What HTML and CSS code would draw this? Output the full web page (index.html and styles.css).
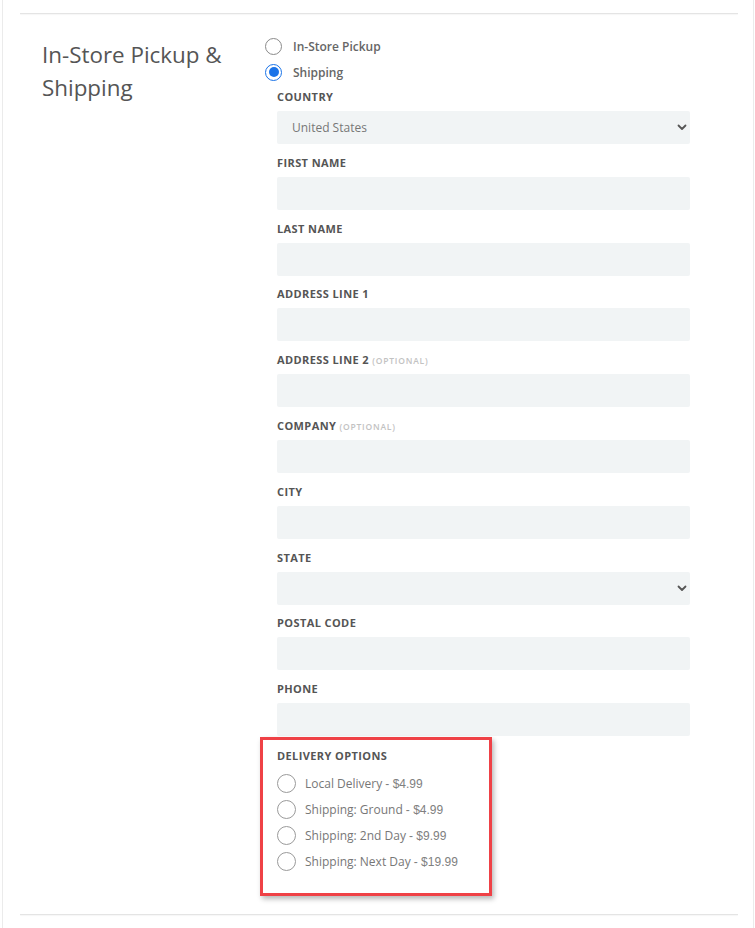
FILE: index.html
```html
<!DOCTYPE html>
<html lang="en">
<head>
<meta charset="utf-8">
<title>In-Store Pickup &amp; Shipping</title>
<link rel="stylesheet" href="styles.css">
</head>
<body>
<div class="frame">
  <div class="rule"></div>
  <section class="section">
    <h2 class="title">In-Store Pickup &amp; Shipping</h2>
    <div class="form">
      <label class="radio-row">
        <span class="radio"></span>
        <span class="radio-label">In-Store Pickup</span>
      </label>
      <label class="radio-row">
        <span class="radio checked"><span class="dot"></span></span>
        <span class="radio-label">Shipping</span>
      </label>

      <div class="fields">
        <div class="field">
          <div class="field-label">COUNTRY</div>
          <div class="input select">
            <span class="value">United States</span>
            <svg class="chev" width="10" height="7" viewBox="0 0 10 7"><path d="M1.5 1.5 L5 5 L8.5 1.5" fill="none" stroke="#555" stroke-width="1.8" stroke-linecap="round" stroke-linejoin="round"/></svg>
          </div>
        </div>
        <div class="field">
          <div class="field-label">FIRST NAME</div>
          <div class="input"></div>
        </div>
        <div class="field">
          <div class="field-label">LAST NAME</div>
          <div class="input"></div>
        </div>
        <div class="field">
          <div class="field-label">ADDRESS LINE 1</div>
          <div class="input"></div>
        </div>
        <div class="field">
          <div class="field-label">ADDRESS LINE 2 <span class="opt">(OPTIONAL)</span></div>
          <div class="input"></div>
        </div>
        <div class="field">
          <div class="field-label">COMPANY <span class="opt">(OPTIONAL)</span></div>
          <div class="input"></div>
        </div>
        <div class="field">
          <div class="field-label">CITY</div>
          <div class="input"></div>
        </div>
        <div class="field">
          <div class="field-label">STATE</div>
          <div class="input select">
            <span class="value"></span>
            <svg class="chev" width="10" height="7" viewBox="0 0 10 7"><path d="M1.5 1.5 L5 5 L8.5 1.5" fill="none" stroke="#555" stroke-width="1.8" stroke-linecap="round" stroke-linejoin="round"/></svg>
          </div>
        </div>
        <div class="field">
          <div class="field-label">POSTAL CODE</div>
          <div class="input"></div>
        </div>
        <div class="field last">
          <div class="field-label">PHONE</div>
          <div class="input"></div>
        </div>

        <div class="delivery">
          <div class="field-label">DELIVERY OPTIONS</div>
          <div class="options">
            <label class="opt-row"><span class="radio big"></span><span class="opt-text">Local Delivery <span class="price">- $4.99</span></span></label>
            <label class="opt-row"><span class="radio big"></span><span class="opt-text">Shipping: Ground <span class="price">- $4.99</span></span></label>
            <label class="opt-row"><span class="radio big"></span><span class="opt-text">Shipping: 2nd Day <span class="price">- $9.99</span></span></label>
            <label class="opt-row"><span class="radio big"></span><span class="opt-text">Shipping: Next Day <span class="price">- $19.99</span></span></label>
          </div>
        </div>
      </div>
    </div>
  </section>
  <div class="rule bottom"></div>
</div>
</body>
</html>
```

FILE: styles.css
```css
* { box-sizing: border-box; }

html, body {
  margin: 0;
  padding: 0;
  background: #ffffff;
}

body {
  font-family: "Open Sans", "Noto Sans", sans-serif;
  color: #555;
}

.frame {
  margin-left: 2px;
  width: 752px;
  height: 928px;
  border-left: 1px solid #ebebeb;
  border-right: 1px solid #ebebeb;
  padding: 13px 15px 0 17px;
}

.rule {
  height: 1px;
  background: #e4e4e4;
  box-shadow: 0 1px 1px rgba(0, 0, 0, 0.04);
}

.rule.bottom {
  margin-top: 18px;
}

.section {
  display: flex;
  padding-left: 22px;
  padding-top: 19px;
}

.title {
  width: 223px;
  margin: 5px 0 0 0;
  font-size: 22.4px;
  line-height: 33px;
  font-weight: 400;
  color: #555;
}

.form {
  display: flex;
  flex-direction: column;
  width: 425px;
}

.radio-row {
  display: flex;
  align-items: center;
  height: 26px;
  gap: 11px;
}

.radio {
  width: 17px;
  height: 17px;
  border-radius: 50%;
  border: 1.5px solid #8a8a8a;
  background: #fff;
  display: flex;
  align-items: center;
  justify-content: center;
  flex: none;
}

.radio.checked {
  border: 1.5px solid #1a73e8;
}

.radio .dot {
  width: 10px;
  height: 10px;
  border-radius: 50%;
  background: #1a73e8;
}

.radio-label {
  font-size: 12px;
  font-weight: 600;
  color: #666;
}

.fields {
  padding-left: 12px;
  padding-top: 4px;
}

.field {
  padding-bottom: 10.8px;
}

.field.last {
  padding-bottom: 0;
}

.field-label {
  font-size: 11px;
  line-height: 16px;
  height: 16px;
  font-weight: 700;
  color: #555;
  letter-spacing: 0.4px;
  margin-bottom: 6px;
  white-space: nowrap;
}

.opt {
  font-size: 8.5px;
  line-height: 1;
  font-weight: 600;
  color: #c2c2c2;
  letter-spacing: 0.8px;
}

.input {
  width: 413px;
  height: 33px;
  background: #f1f4f5;
  border-radius: 2px;
}

.select {
  display: flex;
  align-items: center;
  justify-content: space-between;
  padding: 0 3px 0 15px;
}

.value {
  font-size: 12px;
  color: #777;
}

.delivery {
  margin-left: -17px;
  margin-top: 1px;
  width: 232px;
  border: 3px solid #ef4146;
  box-shadow: 2px 3px 5px rgba(0, 0, 0, 0.28);
  padding: 8px 0 19px 14px;
}

.delivery .field-label {
  margin-bottom: 6px;
}

.options {
  display: flex;
  flex-direction: column;
}

.opt-row {
  display: flex;
  align-items: center;
  height: 26px;
  gap: 9px;
}

.radio.big {
  width: 19px;
  height: 19px;
  border: 1.5px solid #9a9a9a;
}

.opt-text {
  font-size: 12px;
  color: #777;
}

.price {
  font-family: "Liberation Sans", Arial, sans-serif;
  color: #808080;
}
```
